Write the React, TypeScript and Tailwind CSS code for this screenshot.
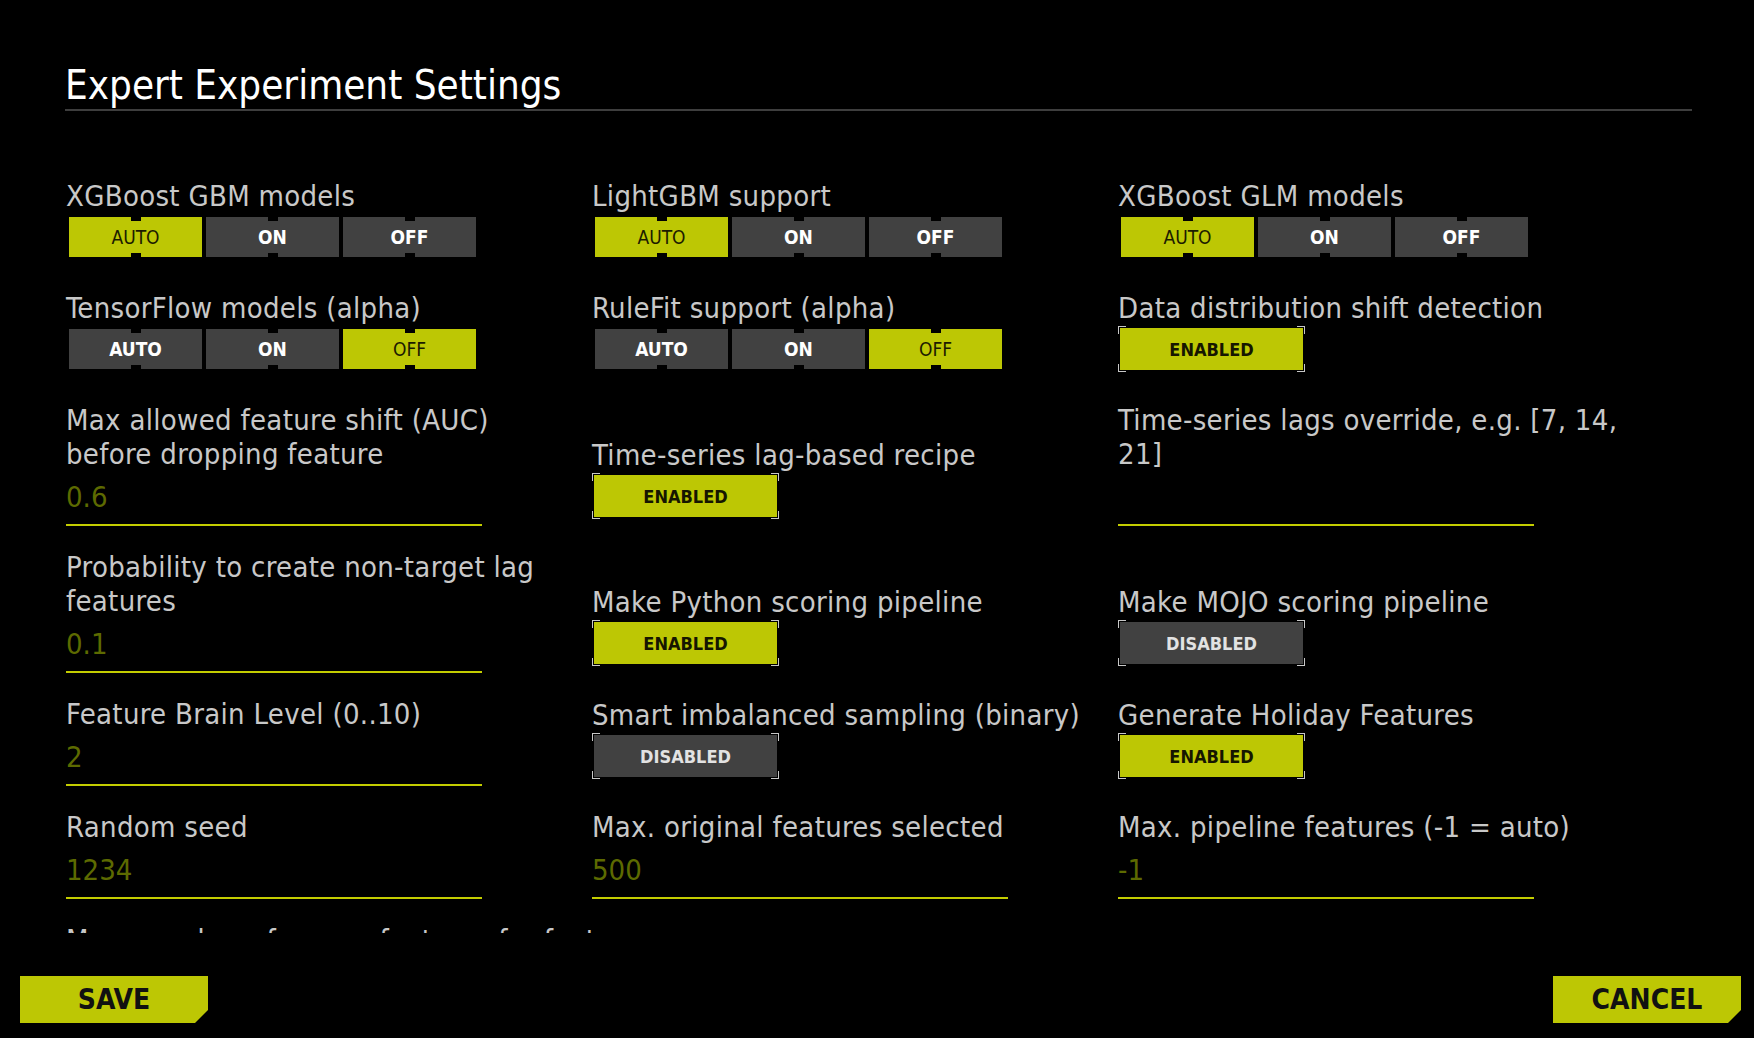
import clsx from "clsx";
import type { ReactNode } from "react";

const Label = ({ children }: { children: ReactNode }) => (
  <div className="whitespace-nowrap text-[29px] leading-[34px] tracking-[0.3px] text-[#c8c8c8]">{children}</div>
);

const Segmented = ({ label, value }: { label: string; value: string }) => (
  <div className="flex flex-col">
    <Label>{label}</Label>
    <div className="mb-[10px] ml-[3px] mt-[4px] flex gap-[4px]">
      {["AUTO", "ON", "OFF"].map((opt) => (
        <div
          key={opt}
          className={clsx(
            "relative flex h-10 w-[133px] items-center justify-center text-[19px]",
            opt === value ? "bg-[#bdc704] text-[#1c1c00]" : "bg-[#414141] font-semibold text-white"
          )}
        >
          <span className="absolute left-1/2 top-0 h-[4px] w-[10px] -translate-x-1/2 bg-black" />
          <span className="absolute bottom-0 left-1/2 h-[4px] w-[10px] -translate-x-1/2 bg-black" />
          {opt}
        </div>
      ))}
    </div>
  </div>
);

const Switch = ({ label, on }: { label: string; on: boolean }) => (
  <div className="flex flex-col">
    <Label>{label}</Label>
    <div className="relative mb-[7px] mt-[1px] h-[46px] w-[187px] p-[2px]">
      <div
        className={clsx(
          "flex h-full items-center justify-center text-[18px] font-bold",
          on ? "bg-[#bdc704] text-[#161600]" : "bg-[#414141] text-[#e2e2e2]"
        )}
      >
        {on ? "ENABLED" : "DISABLED"}
      </div>
      <span className="absolute left-0 top-0 h-2 w-2 border-l border-t border-[#c8c8c8]" />
      <span className="absolute right-0 top-0 h-2 w-2 border-r border-t border-[#c8c8c8]" />
      <span className="absolute bottom-0 left-0 h-2 w-2 border-b border-l border-[#c8c8c8]" />
      <span className="absolute bottom-0 right-0 h-2 w-2 border-b border-r border-[#c8c8c8]" />
    </div>
  </div>
);

const Field = ({ label, value }: { label: ReactNode; value: string }) => (
  <div className="flex flex-col">
    <Label>{label}</Label>
    <div className="mt-2 h-[36px] text-[29px] leading-[36px] text-[#5d6a00]">{value}</div>
    <div className="mt-[9px] h-[2px] w-[416px] bg-[#c3cd00]" />
  </div>
);

const Action = ({ children }: { children: string }) => (
  <button className="flex h-[47px] w-[188px] items-center justify-center bg-[#bdc704] text-[28px] font-bold text-[#111] [clip-path:polygon(0_0,100%_0,100%_calc(100%-13px),calc(100%-13px)_100%,0_100%)]">
    {children}
  </button>
);

export default function App() {
  return (
    <div className="flex h-[1038px] w-full flex-col overflow-hidden bg-black font-['DejaVu_Sans_Condensed','DejaVu_Sans',sans-serif]">
      <div className="pl-[65px] pr-[62px] pt-[62px]">
        <h1 className="border-b-2 border-[#3e3e3e] text-[40px] leading-[47px] text-white">
          Expert Experiment Settings
        </h1>
      </div>

      <div className="flex-1 overflow-hidden">
        <div className="grid grid-cols-[repeat(3,506px)] items-end gap-x-[20px] gap-y-[24px] pl-[66px] pt-[68px]">
          <Segmented label="XGBoost GBM models" value="AUTO" />
          <Segmented label="LightGBM support" value="AUTO" />
          <Segmented label="XGBoost GLM models" value="AUTO" />

          <Segmented label="TensorFlow models (alpha)" value="OFF" />
          <Segmented label="RuleFit support (alpha)" value="OFF" />
          <Switch label="Data distribution shift detection" on />

          <Field
            label={
              <>
                Max allowed feature shift (AUC)
                <br />
                before dropping feature
              </>
            }
            value="0.6"
          />
          <Switch label="Time-series lag-based recipe" on />
          <Field
            label={
              <>
                Time-series lags override, e.g. [7, 14,
                <br />
                21]
              </>
            }
            value=""
          />

          <Field
            label={
              <>
                Probability to create non-target lag
                <br />
                features
              </>
            }
            value="0.1"
          />
          <Switch label="Make Python scoring pipeline" on />
          <Switch label="Make MOJO scoring pipeline" on={false} />

          <Field label="Feature Brain Level (0..10)" value="2" />
          <Switch label="Smart imbalanced sampling (binary)" on={false} />
          <Switch label="Generate Holiday Features" on />

          <Field label="Random seed" value="1234" />
          <Field label="Max. original features selected" value="500" />
          <Field label="Max. pipeline features (-1 = auto)" value="-1" />

          <Field label="Max. number of rows x features for feature" value="" />
        </div>
      </div>

      <div className="flex h-[105px] shrink-0 items-start justify-between pl-[20px] pr-[13px] pt-[43px]">
        <Action>SAVE</Action>
        <Action>CANCEL</Action>
      </div>
    </div>
  );
}
